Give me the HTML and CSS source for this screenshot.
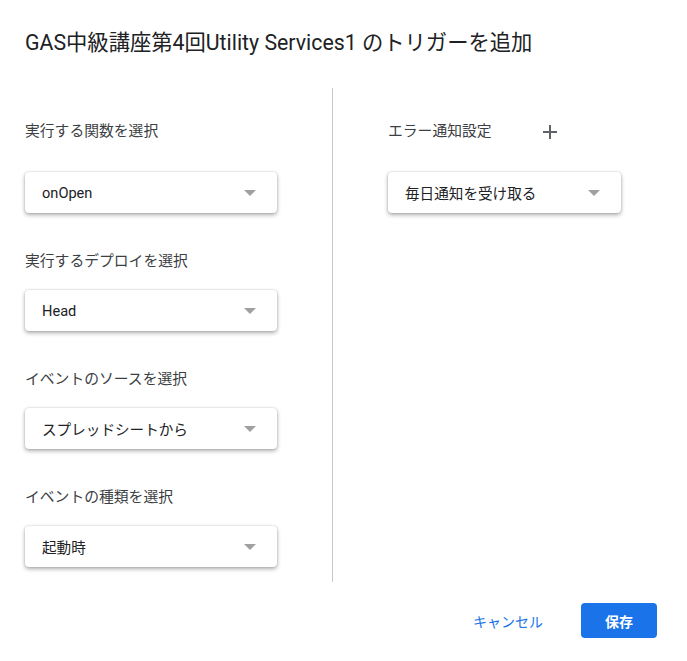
FILE: index.html
```html
<!DOCTYPE html>
<html lang="ja">
<head>
<meta charset="utf-8">
<title>トリガーを追加</title>
<link rel="stylesheet" href="styles.css">
</head>
<body>
<div class="dialog">
  <h1 class="title">GAS中級講座第4回Utility Services1 のトリガーを追加</h1>
  <div class="columns">
    <div class="col col-left">
      <div class="field field-first">
        <div class="label">実行する関数を選択</div>
        <div class="select"><span class="value">onOpen</span><span class="arrow"></span></div>
      </div>
      <div class="field">
        <div class="label">実行するデプロイを選択</div>
        <div class="select"><span class="value">Head</span><span class="arrow"></span></div>
      </div>
      <div class="field">
        <div class="label">イベントのソースを選択</div>
        <div class="select"><span class="value">スプレッドシートから</span><span class="arrow"></span></div>
      </div>
      <div class="field">
        <div class="label">イベントの種類を選択</div>
        <div class="select"><span class="value">起動時</span><span class="arrow"></span></div>
      </div>
    </div>
    <div class="divider"></div>
    <div class="col col-right">
      <div class="field field-first">
        <div class="label label-row">エラー通知設定
          <span class="plus" aria-label="追加">
            <svg width="14" height="14" viewBox="0 0 14 14"><path d="M7 0v14M0 7h14" stroke="#5f6368" stroke-width="2" fill="none"/></svg>
          </span>
        </div>
        <div class="select select-narrow"><span class="value">毎日通知を受け取る</span><span class="arrow"></span></div>
      </div>
    </div>
  </div>
  <div class="footer">
    <button class="btn btn-text">キャンセル</button>
    <button class="btn btn-primary">保存</button>
  </div>
</div>
</body>
</html>
```

FILE: styles.css
```css
* { box-sizing: border-box; }
html, body {
  margin: 0;
  padding: 0;
  background: #fff;
}
body {
  font-family: Roboto, "Noto Sans CJK JP", sans-serif;
  color: #202124;
}
.dialog {
  width: 687px;
  height: 661px;
  padding: 29px 30px 0 25px;
}
.title {
  margin: 0;
  font-size: 21.3px;
  line-height: 28px;
  font-weight: 400;
  color: #202124;
  white-space: nowrap;
}
.columns {
  display: flex;
  margin-top: 31px;
}
.col {
  padding-top: 33px;
  padding-bottom: 15px;
}
.col-left {
  width: 252px;
}
.col-right {
  width: 233px;
}
.divider {
  width: 1px;
  background: #c8c8c8;
  margin: 0 55px;
}
.field {
  display: flex;
  flex-direction: column;
}
.field + .field {
  margin-top: 38px;
}
.label {
  font-size: 14.8px;
  line-height: 20px;
  color: #3c4043;
  margin-bottom: 19px;
  white-space: nowrap;
}
.field-first .label {
  margin-bottom: 31px;
}
.label-row {
  display: flex;
  align-items: center;
}
.plus {
  display: inline-flex;
  margin-left: 51px;
  margin-top: 1px;
}
.select {
  height: 41px;
  background: #fff;
  border-radius: 4px;
  box-shadow: 0 2px 4px rgba(0,0,0,0.32), 0 0 2px rgba(0,0,0,0.18);
  display: flex;
  align-items: center;
  justify-content: space-between;
  padding: 0 21px 0 17px;
}
.value {
  font-size: 14.6px;
  color: #202124;
  white-space: nowrap;
}
.arrow {
  width: 0;
  height: 0;
  border-left: 6px solid transparent;
  border-right: 6px solid transparent;
  border-top: 6px solid #a0a0a0;
}
.footer {
  display: flex;
  justify-content: flex-end;
  align-items: center;
  gap: 22px;
  margin-top: 21px;
}
.btn {
  font-family: Roboto, "Noto Sans CJK JP", sans-serif;
  font-size: 14px;
  border: none;
  background: none;
  cursor: pointer;
  height: 35px;
  border-radius: 4px;
}
.btn-text {
  color: #1a73e8;
  padding: 0 16px;
}
.btn-primary {
  background: #1a73e8;
  color: #fff;
  font-weight: 700;
  width: 76px;
}
```
